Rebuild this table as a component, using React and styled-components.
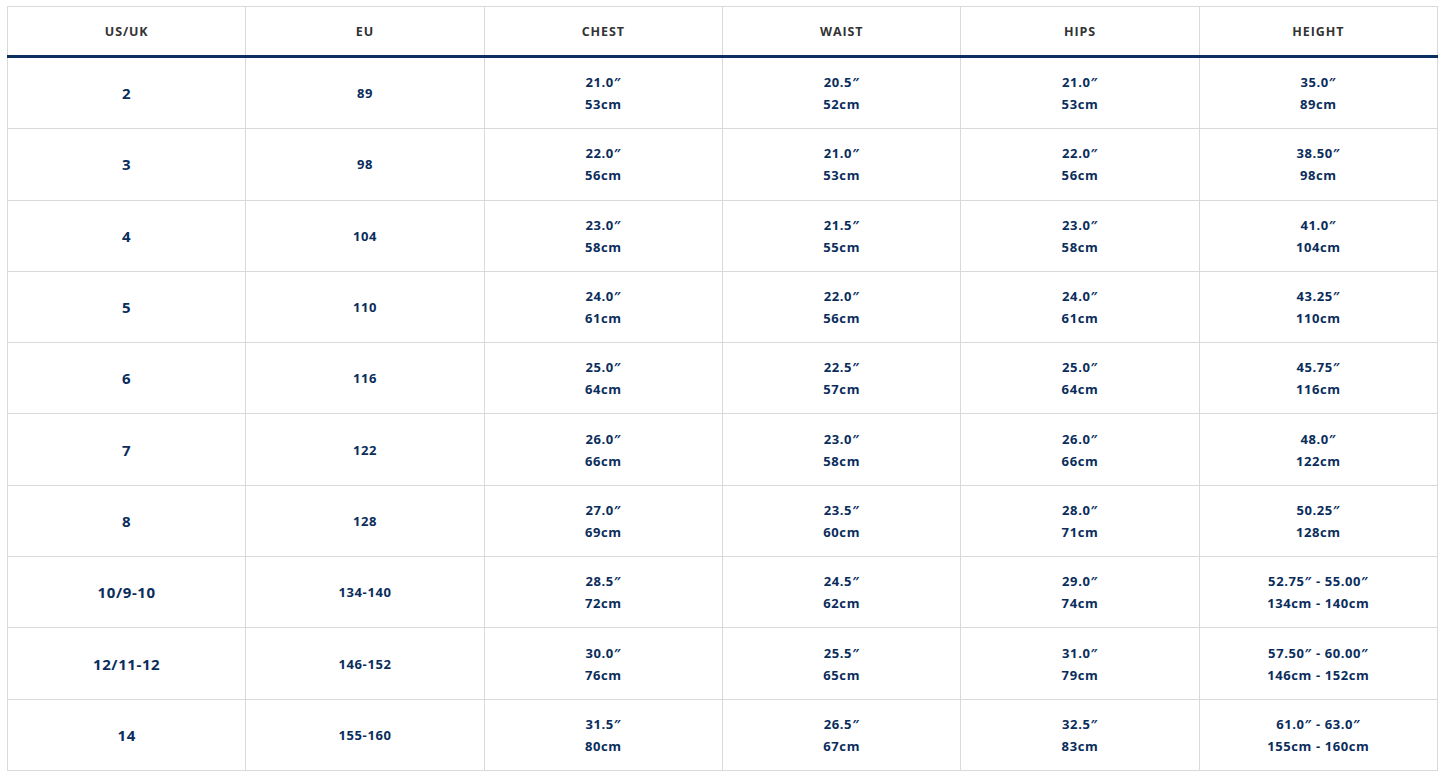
import styled, { createGlobalStyle } from "styled-components";

const GlobalStyle = createGlobalStyle`
  body {
    margin: 0;
    background: #ffffff;
    font-family: "Open Sans", "Liberation Sans", sans-serif;
  }
`;

const Page = styled.div`
  padding: 6px 7px 0 7px;
`;

const Table = styled.table`
  width: 1431px;
  border-collapse: collapse;
  table-layout: fixed;
  border: 1px solid #d9d9d9;
`;

const HeadCell = styled.th`
  height: 48px;
  padding: 0;
  border-left: 1px solid #d9d9d9;
  border-right: 1px solid #d9d9d9;
  border-bottom: 3px solid #0b2f5e;
  font-size: 12.5px;
  font-weight: 700;
  letter-spacing: 0.9px;
  color: #333333;
  text-align: center;
  vertical-align: middle;
`;

const Cell = styled.td`
  height: 70.3px;
  padding: 0;
  border: 1px solid #d9d9d9;
  text-align: center;
  vertical-align: middle;
  color: #0a2d5c;
  font-weight: 700;
  font-size: ${(p) => (p.$big ? "15px" : "13px")};
  letter-spacing: ${(p) => (p.$big ? "0.6px" : "0.6px")};
  line-height: 22px;
`;

const Line = styled.div`
  white-space: nowrap;
`;

const headers = ["US/UK", "EU", "CHEST", "WAIST", "HIPS", "HEIGHT"];

const rows = [
  ["2", "89", ["21.0″", "53cm"], ["20.5″", "52cm"], ["21.0″", "53cm"], ["35.0″", "89cm"]],
  ["3", "98", ["22.0″", "56cm"], ["21.0″", "53cm"], ["22.0″", "56cm"], ["38.50″", "98cm"]],
  ["4", "104", ["23.0″", "58cm"], ["21.5″", "55cm"], ["23.0″", "58cm"], ["41.0″", "104cm"]],
  ["5", "110", ["24.0″", "61cm"], ["22.0″", "56cm"], ["24.0″", "61cm"], ["43.25″", "110cm"]],
  ["6", "116", ["25.0″", "64cm"], ["22.5″", "57cm"], ["25.0″", "64cm"], ["45.75″", "116cm"]],
  ["7", "122", ["26.0″", "66cm"], ["23.0″", "58cm"], ["26.0″", "66cm"], ["48.0″", "122cm"]],
  ["8", "128", ["27.0″", "69cm"], ["23.5″", "60cm"], ["28.0″", "71cm"], ["50.25″", "128cm"]],
  ["10/9-10", "134-140", ["28.5″", "72cm"], ["24.5″", "62cm"], ["29.0″", "74cm"], ["52.75″ - 55.00″", "134cm - 140cm"]],
  ["12/11-12", "146-152", ["30.0″", "76cm"], ["25.5″", "65cm"], ["31.0″", "79cm"], ["57.50″ - 60.00″", "146cm - 152cm"]],
  ["14", "155-160", ["31.5″", "80cm"], ["26.5″", "67cm"], ["32.5″", "83cm"], ["61.0″ - 63.0″", "155cm - 160cm"]],
];

export default function App() {
  return (
    <Page>
      <GlobalStyle />
      <Table>
        <thead>
          <tr>
            {headers.map((h) => (
              <HeadCell key={h}>{h}</HeadCell>
            ))}
          </tr>
        </thead>
        <tbody>
          {rows.map((row) => (
            <tr key={row[0]}>
              {row.map((value, i) => (
                <Cell key={i} $big={i === 0}>
                  {Array.isArray(value)
                    ? value.map((line) => <Line key={line}>{line}</Line>)
                    : value}
                </Cell>
              ))}
            </tr>
          ))}
        </tbody>
      </Table>
    </Page>
  );
}
